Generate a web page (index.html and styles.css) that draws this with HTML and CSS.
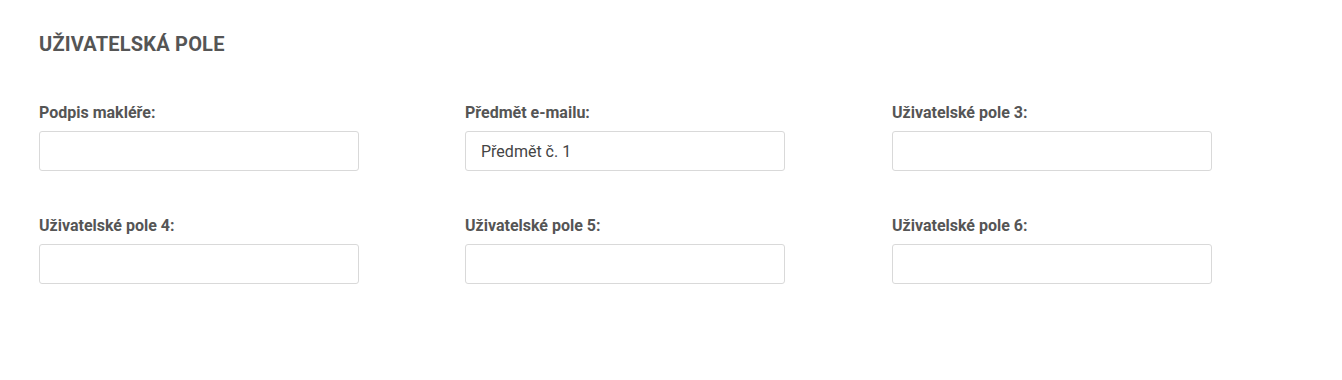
FILE: index.html
```html
<!DOCTYPE html>
<html lang="cs">
<head>
<meta charset="utf-8">
<title>Uživatelská pole</title>
<link rel="stylesheet" href="styles.css">
</head>
<body>
<section class="panel">
  <h2 class="title">UŽIVATELSKÁ POLE</h2>
  <div class="grid">
    <div class="field">
      <label class="label">Podpis makléře:</label>
      <input class="input" type="text" value="">
    </div>
    <div class="field">
      <label class="label">Předmět e-mailu:</label>
      <input class="input" type="text" value="Předmět č. 1">
    </div>
    <div class="field">
      <label class="label">Uživatelské pole 3:</label>
      <input class="input" type="text" value="">
    </div>
    <div class="field">
      <label class="label">Uživatelské pole 4:</label>
      <input class="input" type="text" value="">
    </div>
    <div class="field">
      <label class="label">Uživatelské pole 5:</label>
      <input class="input" type="text" value="">
    </div>
    <div class="field">
      <label class="label">Uživatelské pole 6:</label>
      <input class="input" type="text" value="">
    </div>
  </div>
</section>
</body>
</html>
```
FILE: styles.css
```css
html, body {
  margin: 0;
  padding: 0;
  background: #fff;
}
body {
  font-family: Roboto, "Liberation Sans", Arial, sans-serif;
  color: #555;
}
.panel {
  padding: 32px 23px 0 39px;
  width: 1280px;
}
.title {
  margin: 0;
  font-size: 20px;
  font-weight: 700;
  line-height: 24px;
  letter-spacing: 0.2px;
  color: #555;
}
.grid {
  margin-top: 47px;
  display: grid;
  grid-template-columns: 426px 427px 427px;
  row-gap: 45px;
}
.field {
  display: flex;
  flex-direction: column;
}
.label {
  font-size: 16px;
  font-weight: 700;
  line-height: 19px;
  color: #555;
  margin-bottom: 9px;
}
.input {
  box-sizing: border-box;
  width: 320px;
  height: 40px;
  border: 1px solid #d9d9d9;
  border-radius: 3px;
  padding: 0 15px;
  font-family: Roboto, "Liberation Sans", Arial, sans-serif;
  font-size: 16px;
  color: #444;
  background: #fff;
  outline: none;
}
```
